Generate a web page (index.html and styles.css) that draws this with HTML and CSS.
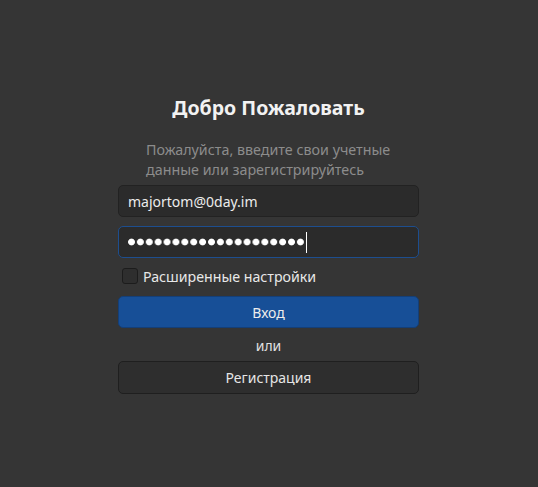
FILE: index.html
```html
<!DOCTYPE html>
<html lang="ru">
<head>
<meta charset="utf-8">
<title>Вход</title>
<link rel="stylesheet" href="styles.css">
</head>
<body>
<main class="screen">
  <form class="login">
    <h1 class="title">Добро Пожаловать</h1>
    <p class="subtitle">Пожалуйста, введите свои учетные<br>данные или зарегистрируйтесь</p>
    <div class="field">majortom@0day.im</div>
    <div class="field field-focus"><span class="dots" role="img" aria-label="Пароль"></span><span class="caret"></span></div>
    <label class="check-row"><span class="checkbox"></span><span class="check-label">Расширенные настройки</span></label>
    <button type="button" class="btn btn-primary">Вход</button>
    <div class="or">или</div>
    <button type="button" class="btn btn-secondary">Регистрация</button>
  </form>
</main>
</body>
</html>
```
FILE: styles.css
```css
html, body {
  margin: 0;
  padding: 0;
  background: #353535;
}
body {
  font-family: "Noto Sans", "Open Sans", sans-serif;
  color: #e6e6e6;
}
.screen {
  width: 538px;
  height: 487px;
  display: flex;
  justify-content: flex-start;
  padding: 96px 0 0 118px;
  box-sizing: border-box;
}
.login {
  width: 301px;
  display: flex;
  flex-direction: column;
}
.title {
  margin: 0;
  font-size: 19.5px;
  line-height: 24px;
  font-weight: 700;
  text-align: center;
  color: #f2f2f2;
}
.subtitle {
  margin: 20px 0 0;
  padding-left: 28px;
  font-size: 14.3px;
  line-height: 20px;
  color: #8c8c8c;
  white-space: nowrap;
}
.field {
  margin-top: 5px;
  height: 32px;
  box-sizing: border-box;
  border: 1px solid #222222;
  border-radius: 5px;
  background: #2b2b2b;
  padding: 0 9px;
  display: flex;
  align-items: center;
  font-size: 14px;
  color: #ececec;
}
.field-focus {
  margin-top: 9px;
  border-color: #1d4e8f;
}
.dots {
  width: 177px;
  height: 8px;
  background: radial-gradient(circle at 3.5px 4px, #ffffff 3px, rgba(255,255,255,0) 3.8px) 0 0 / 8.9px 8px repeat-x;
}
.caret {
  width: 1px;
  height: 21px;
  background: #ffffff;
  margin-left: 1px;
}
.check-row {
  margin-top: 7px;
  height: 22px;
  display: flex;
  align-items: center;
  padding-left: 4px;
  gap: 5px;
  font-size: 14.2px;
  color: #e8e8e8;
}
.checkbox {
  width: 16px;
  height: 16px;
  box-sizing: border-box;
  border: 1px solid #1c1c1c;
  border-radius: 3px;
  background: #2e2e2e;
}
.btn {
  height: 32px;
  box-sizing: border-box;
  border-radius: 5px;
  font-family: inherit;
  font-size: 14px;
  padding: 0;
}
.btn-primary {
  margin-top: 9px;
  background: #174f97;
  border: 1px solid #143f78;
  color: #ededed;
}
.or {
  margin-top: 8px;
  text-align: center;
  font-size: 14px;
  line-height: 20px;
  color: #e0e0e0;
}
.btn-secondary {
  margin-top: 5px;
  height: 33px;
  background: #2e2e2e;
  border: 1px solid #1f1f1f;
  color: #e6e6e6;
}
```
